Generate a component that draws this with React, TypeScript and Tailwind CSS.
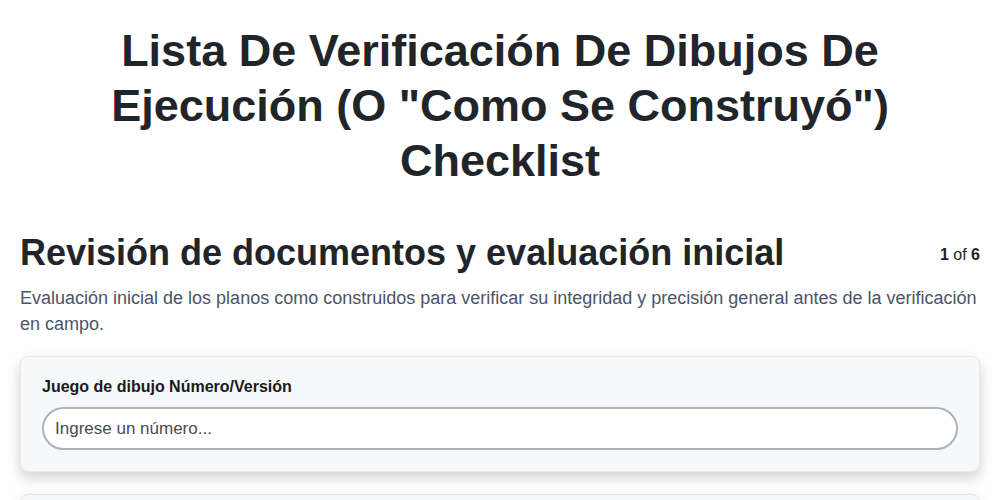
import React from "react";

export default function App() {
  return (
    <div className="min-h-screen bg-white text-[#212529]" style={{ fontFamily: '"Liberation Sans", Arial, sans-serif' }}>
      <div className="px-5 pt-[23px]">
        <h1 className="mx-auto max-w-[820px] text-center text-[45px] font-bold leading-[55px] text-[#212529]">
          Lista De Verificación De Dibujos De Ejecución (O "Como Se Construyó") Checklist
        </h1>
        <div className="mt-[43px] flex items-start justify-between">
          <h2 className="text-[36px] font-bold leading-[44px] text-[#212529]">
            Revisión de documentos y evaluación inicial
          </h2>
          <div className="mt-[12px] text-[16px] text-[#212529]">
            <span className="font-bold">1</span> of <span className="font-bold">6</span>
          </div>
        </div>
        <p className="mt-[10px] text-[18px] leading-[26px] text-[#4a5568]">
          Evaluación inicial de los planos como construidos para verificar su integridad y precisión general antes de la verificación en campo.
        </p>
        <div className="mt-[19px] rounded-lg border border-[#e5e7eb] bg-[#f7f8fa] px-[21px] pb-[21px] pt-[20px] shadow-[0_6px_14px_rgba(0,0,0,0.18)]">
          <label className="block text-[16px] font-bold leading-[20px] text-[#1a1a1a]">
            Juego de dibujo Número/Versión
          </label>
          <input
            type="text"
            placeholder="Ingrese un número..."
            className="mt-[10px] h-[43px] w-full rounded-full border-2 border-[#adb3ba] bg-white px-[11px] text-[17px] text-[#333] placeholder:text-[#4b4b4b] outline-none"
          />
        </div>
        <div className="mt-[22px] h-[60px] rounded-lg border border-[#e5e7eb] bg-[#f7f8fa] shadow-[0_6px_14px_rgba(0,0,0,0.18)]" />
      </div>
    </div>
  );
}
